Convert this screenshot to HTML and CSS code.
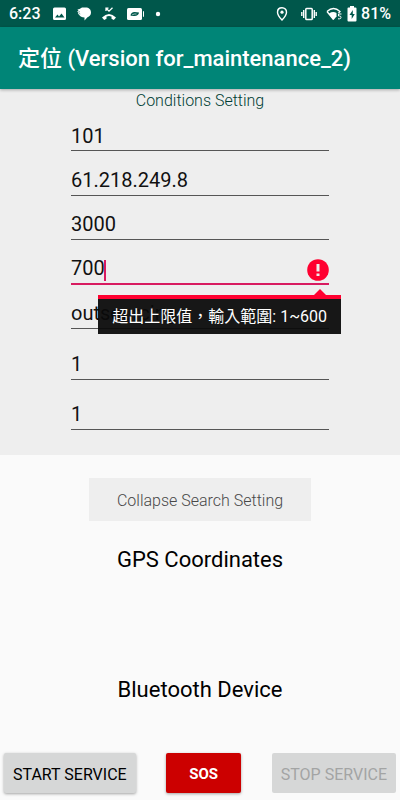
FILE: index.html
```html
<!DOCTYPE html>
<html lang="zh-Hant">
<head>
<meta charset="utf-8">
<meta name="viewport" content="width=device-width, initial-scale=1">
<title>定位</title>
<link rel="stylesheet" href="styles.css">
</head>
<body>
<div class="status">
  <span class="clock">6:23</span>
  <div class="status-left">
    <svg width="14" height="14" viewBox="0 0 14 14"><path fill="#fff" fill-rule="evenodd" d="M1.500 0.500h10q1.500 0 1.500 1.500v9.500q0 1.500-1.500 1.500h-10q-1.500 0-1.500-1.500v-9.500q0-1.500 1.500-1.500zM2 10.500h9.500L8.500 6.500 6 9.500 4.500 7.500z"/></svg>
    <svg width="14" height="14" viewBox="0 0 14 14"><path fill="#fff" d="M5 0.500h3.500C12 0.500 14 2.500 14 5.500c0 2.500-1.500 4-3.500 4.700L7.500 13.500V10.500C5 10.500 3 9.500 2.300 8L.8 6.500 1.800 6 0 4.500 1.500 4 .5 2.500 2.500 2z"/><path d="M1.500 4.300L3 5M2 6.500l1.300.5" stroke="#00574b" stroke-width=".5"/></svg>
    <svg width="16" height="14" viewBox="0 0 16 14"><path d="M5 4V1.200h2.500M5.300 1.500L8 4.200 11.500 .8" fill="none" stroke="#fff" stroke-width="1.300"/><path d="M1 10.500Q8 3.500 15 10.500L12.800 13 10.500 11.700V9.500Q8 8.700 5.500 9.500V11.700L3.200 13z" fill="#fff"/></svg>
    <svg width="18" height="14" viewBox="0 0 18 14"><rect x="0" y="1" width="15" height="12" rx="1.500" fill="#fff"/><path d="M16 4q1 0 1 1v4q0 1-1 1z" fill="#fff"/><path d="M3.500 8.500Q4 5 7.500 5L12 5.500Q11.500 8.700 7.500 9 5 9 3.500 8.500z" fill="#00574b"/><path d="M5 8Q7 6.500 9.500 7" fill="none" stroke="#fff" stroke-width=".6"/></svg>
    <svg width="6" height="14" viewBox="0 0 6 14"><circle cx="3" cy="7" r="2.200" fill="#fff"/></svg>
  </div>
  <div class="status-right">
    <svg width="12" height="14" viewBox="0 0 12 14"><path d="M6 .8C3.200.8 1.500 2.800 1.500 5.200 1.500 8.200 6 13 6 13s4.500-4.800 4.500-7.800C10.500 2.800 8.800.8 6 .8z" fill="none" stroke="#fff" stroke-width="1.400"/><circle cx="6" cy="5.200" r="1.600" fill="#fff"/></svg>
    <svg class="vibrate" width="16" height="14" viewBox="0 0 16 14"><rect x="4.800" y="1.500" width="6.400" height="11" rx=".8" fill="none" stroke="#fff" stroke-width="1.500"/><path d="M2.700 3v8M13.300 3v8M.8 5v4M15.200 5v4" stroke="#fff" stroke-width="1.400"/></svg>
    <svg class="wifi" width="16" height="14" viewBox="0 0 16 14"><path d="M1 4.500Q7.500-1.500 14 4.500L12.500 6M1 4.500L7.500 12.500" fill="none" stroke="#fff" stroke-width="1.300"/><path d="M3 6.500Q7 4 10.500 6V9.500L7.500 13z" fill="#fff"/><path d="M15.500 7h-3v2h1q1.500 0 1.500 1.400t-1.500 1.400H12" fill="none" stroke="#fff"/></svg>
    <svg class="battery" width="10" height="16" viewBox="0 0 10 16"><path fill="#fff" d="M3 0h4v1.500h1.500q1 0 1 1V14.500q0 1-1 1h-7q-1 0-1-1V2.500q0-1 1-1H3z"/><path d="M5.800 4L2.500 9H4.700V13L7.800 8H5.800z" fill="#00574b"/></svg>
    <span>81%</span>
  </div>
</div>
<header class="appbar"><h1>定位 (Version for_maintenance_2)</h1></header>
<main>
  <form class="conditions">
    <h2>Conditions Setting</h2>
    <div class="fields">
      <input aria-label="Number" value="101">
      <input aria-label="Server" value="61.218.249.8">
      <input aria-label="Port" value="3000">
      <div class="field-error">
        <input id="range" aria-label="Range" aria-invalid="true" aria-describedby="range-error" value="700">
        <span class="caret"></span>
        <svg class="alert" width="22" height="22" viewBox="0 0 22 22"><circle cx="11" cy="11" r="10.800" fill="#ff0030"/><path d="M9.500 5h3v7.500h-3zM9.500 14.500h3v2.500h-3z" fill="#eee"/></svg>
        <div class="tooltip" id="range-error" role="alert">超出上限值，輸入範圍: 1~600</div>
      </div>
      <input aria-label="Mode" value="outsourcing">
    </div>
    <div class="fields fields-loose">
      <input aria-label="First count" value="1">
      <input aria-label="Second count" value="1">
    </div>
  </form>
  <button class="collapse" type="button">Collapse Search Setting</button>
  <section class="result"><h2>GPS Coordinates</h2></section>
  <section class="result"><h2>Bluetooth Device</h2></section>
</main>
<footer class="actions">
  <button type="button" class="start">START SERVICE</button>
  <button type="button" class="sos">SOS</button>
  <button type="button" class="stop" disabled>STOP SERVICE</button>
</footer>
</body>
</html>
```
FILE: styles.css
```css
* { box-sizing: border-box; }
body {
  margin: 0;
  min-height: 100vh;
  display: flex;
  flex-direction: column;
  background: #fafafa;
  color: #000;
  font-family: Roboto, "Noto Sans CJK TC", sans-serif;
}
h1, h2 { margin: 0; font-weight: 400; }
button, input { font: inherit; color: inherit; border: 0; border-radius: 0; margin: 0; }
svg { display: block; flex: none; }

.status {
  display: flex;
  align-items: center;
  height: 27px;
  padding: 0 9px;
  background: #00574b;
  color: #fff;
  font-size: 16px;
  font-weight: 500;
}
.status-left { display: flex; gap: 10px; margin-left: 12px; }
.status-right { display: flex; align-items: center; margin-left: auto; }
.vibrate { margin-left: 13px; }
.wifi { margin-left: 9px; }
.battery { margin: 0 4px 0 5px; }

.appbar {
  position: relative;
  display: flex;
  align-items: center;
  height: 62px;
  padding: 2px 18px 0;
  background: #008577;
  color: #fff;
  box-shadow: 0 1px 3px rgba(0, 0, 0, .3);
}
.appbar h1 { font-size: 22px; line-height: 28px; font-weight: 500; white-space: nowrap; }

main { flex: 1; display: flex; flex-direction: column; align-items: center; }
.conditions {
  align-self: stretch;
  padding: 2px 71px 25px;
  background: #eee;
}
.conditions h2 {
  height: 16px;
  font-size: 16px;
  line-height: 20px;
  font-weight: 300;
  text-align: center;
  color: #003d34;
}
.fields { display: grid; grid-auto-rows: 1fr; height: 222px; }
.fields-loose { height: 101px; }
.fields input {
  width: 100%;
  min-width: 0;
  height: 100%;
  padding: 14px 0 0;
  background: none;
  border-bottom: 1px solid #555;
  color: #111;
  font-size: 20px;
  outline: none;
}
.fields-loose input { padding-top: 20px; }
.field-error { position: relative; }
.field-error input { border-bottom: 2px solid #d81b60; }
.caret { position: absolute; left: 33px; bottom: 4px; width: 2px; height: 21px; background: #d81b60; }
.alert { position: absolute; right: 0; bottom: 4px; }
.tooltip {
  position: absolute;
  z-index: 1;
  right: -12px;
  top: calc(100% + 10px);
  padding: 6px 14px 5px;
  border-top: 4px solid #ff0030;
  background: rgba(10, 10, 10, .94);
  color: #fff;
  font-size: 16px;
  line-height: 24px;
  white-space: nowrap;
}
.tooltip::before {
  content: "";
  position: absolute;
  right: 15px;
  bottom: 100%;
  margin-bottom: 4px;
  border: 6px solid transparent;
  border-top: 0;
  border-bottom-color: #ff0030;
}

.collapse {
  width: 222px;
  height: 43px;
  margin: 23px 0;
  padding: 2px 0 0;
  background: #eee;
  color: #484848;
  font-size: 16px;
  font-weight: 300;
}
.result { height: 130px; text-align: center; }
.result:last-child { height: 79px; }
.result h2 { font-size: 22px; line-height: 32px; }

.actions { display: flex; justify-content: space-between; padding: 0 4px 7px; }
.actions button {
  height: 40px;
  padding: 2px 9px 0;
  border-radius: 2px;
  background: #d6d7d7;
  font-size: 16px;
  box-shadow: 0 1px 3px rgba(0, 0, 0, .35);
}
.actions .sos { padding: 2px 23px 0; background: #c00; color: #fff; font-size: 15px; font-weight: 700; }
.actions .stop { color: #a3a4a4; box-shadow: none; }
```
